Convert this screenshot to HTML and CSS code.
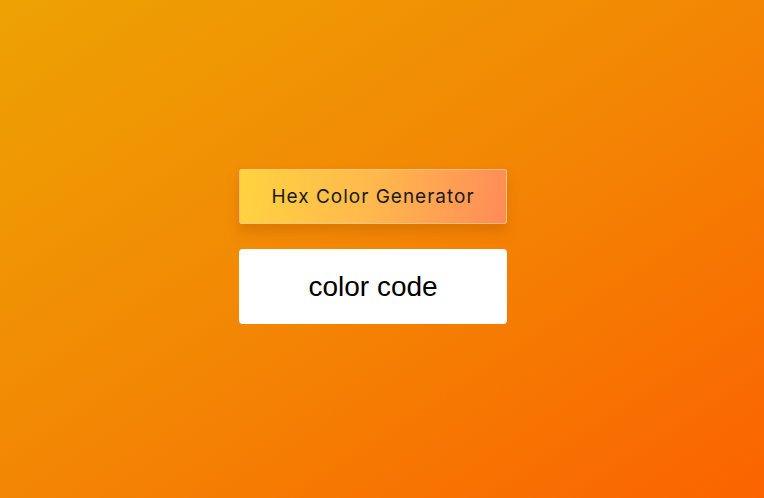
FILE: index.html
```html
<!DOCTYPE html>
<html lang="en">
<head>
<meta charset="utf-8">
<title>Hex Color Generator</title>
<link rel="stylesheet" href="styles.css">
</head>
<body>
<main class="app">
  <button class="gen-btn" type="button">Hex Color Generator</button>
  <div class="code-box">color code</div>
</main>
</body>
</html>
```
FILE: styles.css
```css
html, body {
  margin: 0;
  height: 100%;
}
body {
  background: linear-gradient(to bottom right, #eda203 0%, #f38604 50%, #fb6300 100%);
  font-family: Inter, "Noto Sans", sans-serif;
}
.app {
  height: 100%;
  box-sizing: border-box;
  padding: 0 18px 5px 0;
  display: flex;
  flex-direction: column;
  align-items: center;
  justify-content: center;
  gap: 25px;
}
.gen-btn {
  width: 268px;
  height: 55px;
  border: 1px solid rgba(255, 200, 150, 0.7);
  border-radius: 3px;
  background: linear-gradient(100deg, #ffd340 0%, #ffb84d 50%, #ff8b58 100%);
  box-shadow: 0 8px 12px rgba(180, 90, 0, 0.35);
  font-family: Inter, "Noto Sans", sans-serif;
  font-size: 19px;
  letter-spacing: 1px;
  color: #1a1a1a;
  cursor: pointer;
}
.code-box {
  width: 268px;
  height: 75px;
  background: #fff;
  border-radius: 4px;
  display: flex;
  align-items: center;
  justify-content: center;
  font-family: "Liberation Sans", Arial, sans-serif;
  font-size: 28px;
  color: #000;
}
```
